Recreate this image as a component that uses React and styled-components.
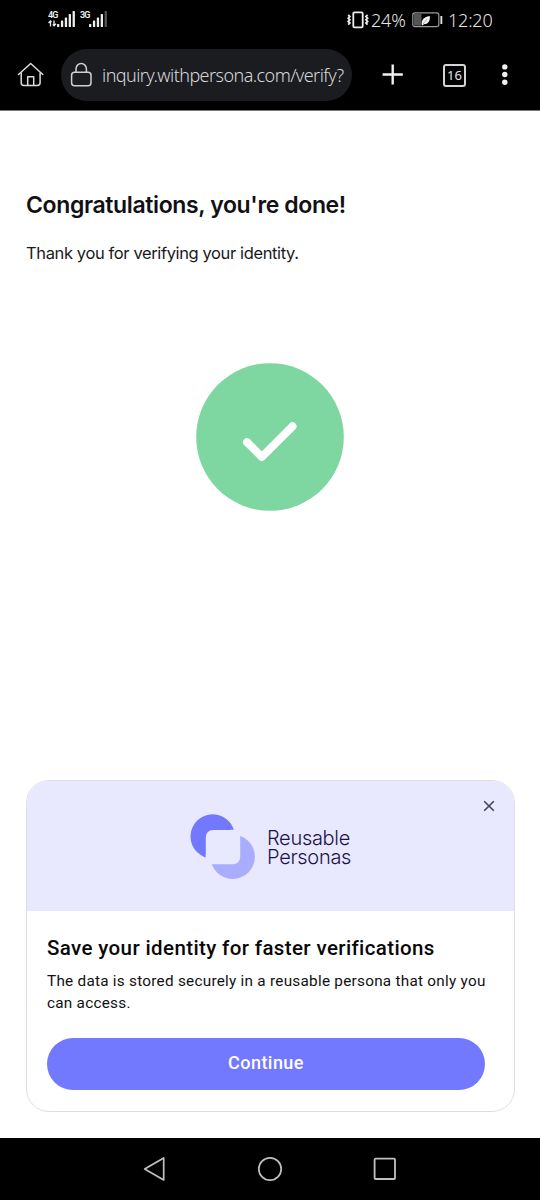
import React from 'react';
import styled, { createGlobalStyle } from 'styled-components';

const GlobalStyle = createGlobalStyle`
  * {
    box-sizing: border-box;
  }

  body {
    margin: 0;
    background-color: #fff;
  }

  svg {
    display: block;
    flex-shrink: 0;
  }
`;

const Screen = styled.div`
  display: flex;
  flex-direction: column;
  width: 540px;
  height: 1200px;
  overflow: hidden;
  background-color: #fff;
`;

const StatusBar = styled.header`
  display: flex;
  justify-content: space-between;
  height: 40px;
  padding: 0 48px 0 48px;
  background-color: #000;
`;

const Signals = styled.div`
  display: flex;
  gap: 5px;
  padding-top: 10px;
`;

const Signal = styled.div`
  display: flex;
  align-items: flex-start;
`;

const Network = styled.div`
  display: flex;
  flex-direction: column;
  width: 9px;
  color: #eee;
  font-family: 'Roboto', sans-serif;
  font-size: 9px;
  font-weight: 600;
  line-height: 10px;
  letter-spacing: -0.8px;
`;

const StatusInfo = styled.div`
  display: flex;
  align-items: center;
`;

const StatusText = styled.span`
  width: ${({ $width }) => $width}px;
  margin-left: ${({ $left }) => $left}px;
  color: #e4e4e4;
  font-family: 'Noto Sans', 'Open Sans', sans-serif;
  font-size: 18px;
  font-weight: 300;
  line-height: 40px;
  letter-spacing: -0.2px;
  white-space: nowrap;
`;

const BatteryIcon = styled.svg`
  margin-left: 5px;
`;

const BrowserBar = styled.div`
  display: flex;
  align-items: center;
  height: 71px;
  padding-left: 17px;
  border-bottom: 1px solid #777;
  background-color: #000;
`;

const AddressBar = styled.div`
  display: flex;
  align-items: center;
  width: 291px;
  height: 52px;
  margin-left: 16px;
  padding: 0 8px 0 9px;
  border-radius: 26px;
  background-color: #1b1c20;
`;

const Url = styled.span`
  width: 242px;
  margin-left: 9px;
  color: #d6d7da;
  font-family: 'Noto Sans', 'Open Sans', sans-serif;
  font-size: 18px;
  font-weight: 300;
  line-height: 30px;
  letter-spacing: -0.56px;
  white-space: nowrap;
`;

const PlusIcon = styled.svg`
  margin-left: 30px;
`;

const TabCount = styled.div`
  display: flex;
  align-items: center;
  justify-content: center;
  width: 23px;
  height: 23px;
  margin-left: 39px;
  border: 2px solid #d4d4d4;
  border-radius: 3px;
  color: #e4e4e4;
  font-family: 'Noto Sans', 'Open Sans', sans-serif;
  font-size: 13px;
  line-height: 18px;
`;

const MenuIcon = styled.svg`
  margin-left: 35px;
`;

const Page = styled.main`
  display: flex;
  flex: 1;
  flex-direction: column;
  padding: 79px 25px 26px 26px;
`;

const Title = styled.h1`
  margin: 0;
  color: #111114;
  font-family: 'Inter', 'Liberation Sans', sans-serif;
  font-size: 23px;
  font-weight: 600;
  line-height: 30px;
  letter-spacing: -0.37px;
  white-space: nowrap;
`;

const Message = styled.p`
  margin: 20px 0 1px;
  color: #19191c;
  font-family: 'Inter', 'Liberation Sans', sans-serif;
  font-size: 16.5px;
  line-height: 26px;
  letter-spacing: -0.38px;
  white-space: nowrap;
`;

const SuccessIcon = styled.svg`
  align-self: center;
  margin-top: 96px;
`;

const Card = styled.section`
  display: flex;
  flex-direction: column;
  height: 332px;
  margin-top: auto;
  overflow: hidden;
  border: 1px solid #dfdfe3;
  border-radius: 23px;
`;

const CardBanner = styled.div`
  display: flex;
  align-items: flex-start;
  height: 130px;
  padding: 33px 18px 0 163px;
  background-color: #e8e8ff;
`;

const BrandName = styled.div`
  margin: 15px 0 0 11px;
  color: #1c1548;
  font-family: 'Inter', 'Liberation Sans', sans-serif;
  font-size: 20px;
  font-weight: 300;
  line-height: 19px;
  letter-spacing: -0.3px;
`;

const CloseButton = styled.button`
  display: flex;
  align-items: center;
  justify-content: center;
  width: 14px;
  height: 14px;
  margin: -15px 0 0 auto;
  padding: 0;
  border: none;
  background: none;
  cursor: pointer;
`;

const CardBody = styled.div`
  display: flex;
  flex-direction: column;
  padding: 23px 29px 0 20px;
`;

const CardTitle = styled.h2`
  margin: 0;
  color: #08080a;
  font-family: 'Roboto', sans-serif;
  font-size: 20.5px;
  font-weight: 500;
  line-height: 28px;
  letter-spacing: 0.38px;
  white-space: nowrap;
`;

const CardText = styled.p`
  margin: 8px 0 0;
  color: #111;
  font-family: 'Roboto', sans-serif;
  font-size: 15.3px;
  line-height: 22px;
  letter-spacing: 0.26px;
  white-space: nowrap;
`;

const ContinueButton = styled.button`
  height: 52px;
  margin-top: 23.5px;
  padding: 0 0 2px;
  border: none;
  border-radius: 26px;
  background-color: #7379ff;
  color: #fff;
  font-family: 'Roboto', sans-serif;
  font-size: 18px;
  font-weight: 500;
  letter-spacing: 0.45px;
  cursor: pointer;
`;

const NavBar = styled.nav`
  display: flex;
  align-items: center;
  justify-content: space-between;
  height: 62px;
  padding: 0 143px 0 142px;
  background-color: #000;
`;

const levels = [3, 6.5, 9.5, 13, 16];

const Bars = ({ active }) => (
  <svg width="18" height="18" viewBox="0 0 18 18">
    {levels.map((h, i) => (
      <rect
        key={h}
        x={i * 3.9}
        y={17 - h}
        width="2.3"
        height={h}
        rx="0.6"
        fill={i < active ? '#eee' : '#555'}
      />
    ))}
  </svg>
);

const HomeIcon = () => (
  <svg width="28" height="26" viewBox="0 0 28 26" fill="none" stroke="#dcdcdc" strokeWidth="1.5" strokeLinecap="round" strokeLinejoin="round">
    <path d="M1.5 12.5 13.7 1.5 25.8 12.5" />
    <path d="M4.2 11V20.7q0 2.7 2.7 2.7h13.5q2.7 0 2.7-2.7V11" />
    <path d="M10.7 23.2V14.7h6v8.5" />
  </svg>
);

const LockIcon = () => (
  <svg width="23" height="26" viewBox="0 0 23 26" fill="none" stroke="#d0d0d2" strokeWidth="1.5">
    <rect x="1.6" y="10.2" width="19.4" height="13.6" rx="3" />
    <path d="M6 10V6.8a5.2 5.2 0 0 1 10.4 0V10" />
  </svg>
);

export default function App() {
  return (
    <Screen>
      <GlobalStyle />
      <StatusBar>
        <Signals>
          <Signal>
            <Network>
              4G
              <svg width="9" height="7" viewBox="0 0 9 7" fill="none" stroke="#eee" strokeWidth="1.3">
                <path d="M2.5 6.5v-5M.6 3 2.5 1l1 1M6 .5v5M4.8 4.3 6 5.7 8 3.8" />
              </svg>
            </Network>
            <Bars active={5} />
          </Signal>
          <Signal>
            <Network>3G</Network>
            <Bars active={4} />
          </Signal>
        </Signals>
        <StatusInfo>
          <svg width="23" height="18" viewBox="0 0 23 18" fill="none" stroke="#eee">
            <rect x="6.3" y="1.4" width="9.4" height="15" rx="1.2" strokeWidth="1.8" />
            <path d="m1.2 4 1.6 1.6-1.6 1.6 1.6 1.6-1.6 1.6 1.6 1.6-1.6 1.6M20.6 4l-1.6 1.6 1.6 1.6-1.6 1.6 1.6 1.6-1.6 1.6 1.6 1.6" strokeWidth="1.8" />
          </svg>
          <StatusText $width={36} $left={1}>24%</StatusText>
          <BatteryIcon width="31" height="16" viewBox="0 0 31 16">
            <rect x="0.8" y="0.9" width="26" height="13.8" rx="2.2" fill="none" stroke="#9a9a9a" strokeWidth="1.2" />
            <rect x="2" y="2" width="7.5" height="11.6" fill="#555" />
            <path d="M9.8 12.8c-.5-4 1.2-7.8 8-8.8.5 5.4-1.8 8.2-6 8.2l-1 1.2z" fill="#f4f4f4" />
            <path d="m11 12 4-5" stroke="#777" strokeWidth=".6" />
            <rect x="28.4" y="4" width="1.9" height="8" rx=".5" fill="#ddd" />
          </BatteryIcon>
          <StatusText $width={44} $left={5}>12:20</StatusText>
        </StatusInfo>
      </StatusBar>

      <BrowserBar>
        <HomeIcon />
        <AddressBar>
          <LockIcon />
          <Url>inquiry.withpersona.com/verify?</Url>
        </AddressBar>
        <PlusIcon width="22" height="22" viewBox="0 0 22 22" stroke="#f1f1f1" strokeWidth="2.4">
          <path d="M10.7.4v20.2M.6 10.5h20.2" />
        </PlusIcon>
        <TabCount>16</TabCount>
        <MenuIcon width="8" height="22" viewBox="0 0 8 22" fill="#f1f1f1">
          <circle cx="3.8" cy="2.9" r="2.7" />
          <circle cx="3.8" cy="10.5" r="2.7" />
          <circle cx="3.8" cy="18.2" r="2.7" />
        </MenuIcon>
      </BrowserBar>

      <Page>
        <Title>Congratulations, you're done!</Title>
        <Message>Thank you for verifying your identity.</Message>
        <SuccessIcon width="149" height="148" viewBox="0 0 149 148">
          <circle cx="74" cy="74" r="73.8" fill="#7ed6a0" />
          <path d="M51 79.2 65.8 94 96.5 63.3" fill="none" stroke="#fff" strokeWidth="8" strokeLinecap="round" strokeLinejoin="round" />
        </SuccessIcon>

        <Card>
          <CardBanner>
            <svg width="66" height="66" viewBox="0 0 66 66">
              <circle cx="22.7" cy="22.4" r="22.2" fill="#7379ff" />
              <circle cx="42.7" cy="42.8" r="22.2" fill="#a8adff" />
              <path d="M15.8 50.2V23a7 7 0 0 1 7-7h27.4v27.2a7 7 0 0 1-7 7z" fill="#e8e8ff" />
              <path d="M15.8 40v24H20V50zM40 15.8h26v4H50z" fill="#e8e8ff" />
            </svg>
            <BrandName>
              Reusable
              <br />
              Personas
            </BrandName>
            <CloseButton aria-label="Close">
              <svg width="12" height="12" viewBox="0 0 12 12" stroke="#45435a" strokeWidth="1.6">
                <path d="m1.2 1.2 9.6 9.6M10.8 1.2l-9.6 9.6" />
              </svg>
            </CloseButton>
          </CardBanner>
          <CardBody>
            <CardTitle>Save your identity for faster verifications</CardTitle>
            <CardText>
              The data is stored securely in a reusable persona that only you
              <br />
              can access.
            </CardText>
            <ContinueButton>Continue</ContinueButton>
          </CardBody>
        </Card>
      </Page>

      <NavBar>
        <svg width="24" height="26" viewBox="0 0 24 26" fill="none" stroke="#c0c0c0" strokeWidth="1.7" strokeLinejoin="round">
          <path d="M2.7 13 21.7 2v22z" />
        </svg>
        <svg width="26" height="26" viewBox="0 0 26 26" fill="none" stroke="#c0c0c0" strokeWidth="1.7">
          <circle cx="13" cy="13" r="11.2" />
        </svg>
        <svg width="24" height="24" viewBox="0 0 24 24" fill="none" stroke="#c0c0c0" strokeWidth="1.8">
          <rect x="1.6" y="1.6" width="20.4" height="20.4" rx="1" />
        </svg>
      </NavBar>
    </Screen>
  );
}
